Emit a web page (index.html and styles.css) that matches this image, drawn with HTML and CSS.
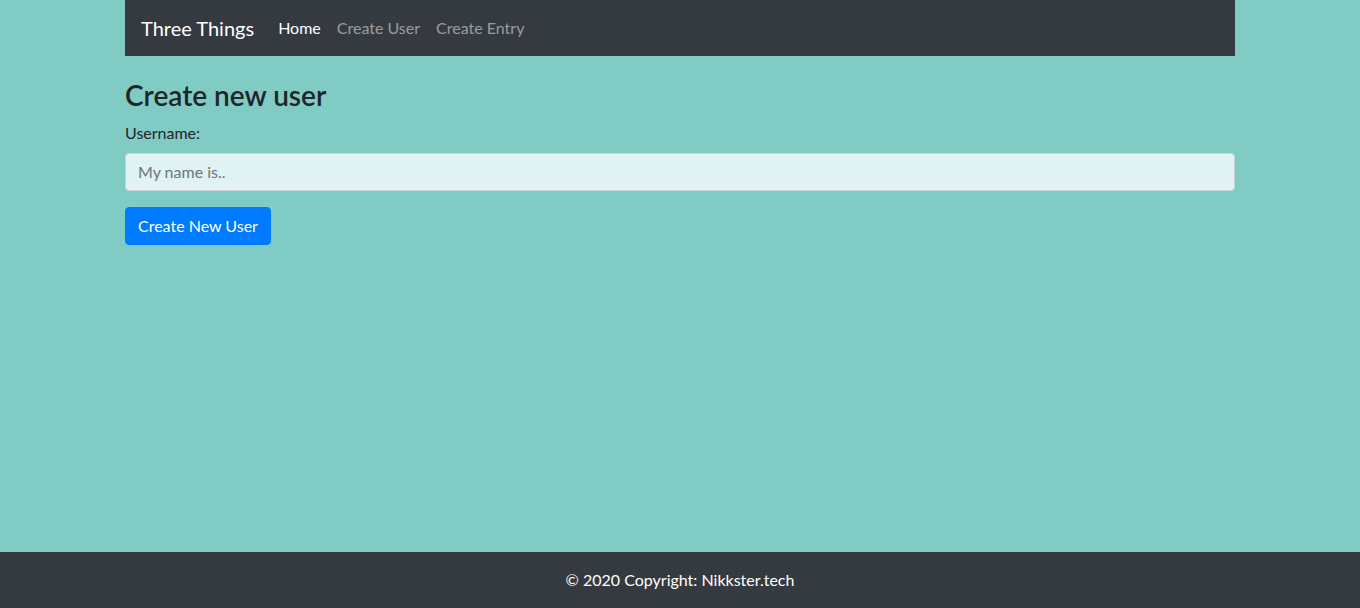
FILE: index.html
```html
<!DOCTYPE html>
<html lang="en">
<head>
<meta charset="utf-8">
<title>Three Things</title>
<link rel="stylesheet" href="styles.css">
</head>
<body>
<div class="page">
  <div class="container">
    <nav class="navbar">
      <a class="brand" href="#">Three Things</a>
      <ul class="nav">
        <li><a class="nav-link active" href="#">Home</a></li>
        <li><a class="nav-link" href="#">Create User</a></li>
        <li><a class="nav-link" href="#">Create Entry</a></li>
      </ul>
    </nav>
    <main class="main">
      <h3 class="title">Create new user</h3>
      <form class="form">
        <div class="form-group">
          <label class="label" for="username">Username:</label>
          <input class="input" id="username" type="text" placeholder="My name is..">
        </div>
        <button class="btn" type="button">Create New User</button>
      </form>
    </main>
  </div>
  <footer class="footer">© 2020 Copyright: Nikkster.tech</footer>
</div>
</body>
</html>
```
FILE: styles.css
```css
* { box-sizing: border-box; }
html, body { margin: 0; padding: 0; }
body {
  font-family: "Segoe UI", Lato, "Noto Sans", sans-serif;
  font-size: 16px;
  line-height: 1.5;
  color: #212529;
  background: #80cbc4;
}
.page {
  min-height: 100vh;
  display: flex;
  flex-direction: column;
}
.container {
  width: 100%;
  max-width: 1140px;
  padding: 0 15px;
  margin: 0 auto;
  flex: 1;
}
.navbar {
  background: #343a40;
  height: 56px;
  display: flex;
  align-items: center;
  padding: 0 16px;
}
.brand {
  color: #fff;
  font-size: 20px;
  text-decoration: none;
  margin-right: 16px;
  line-height: 30px;
}
.nav {
  list-style: none;
  margin: 0;
  padding: 0;
  display: flex;
}
.nav-link {
  display: block;
  padding: 8px;
  color: rgba(255,255,255,0.5);
  text-decoration: none;
}
.nav-link.active { color: #fff; }
.main { padding-top: 23px; }
.title {
  margin: 0 0 8px;
  font-size: 28px;
  font-weight: 600;
  line-height: 1.2;
}
.form-group { margin-bottom: 16px; }
.label {
  display: inline-block;
  margin-bottom: 8px;
}
.input {
  display: block;
  width: 100%;
  height: 38px;
  padding: 6px 12px;
  font: inherit;
  color: #495057;
  background: #e0f2f1;
  border: 1px solid #ced4da;
  border-radius: 4px;
}
.input::placeholder { color: #6c757d; }
.btn {
  display: inline-block;
  height: 38px;
  padding: 6px 12px;
  font: inherit;
  color: #fff;
  background: #007bff;
  border: 1px solid #007bff;
  border-radius: 4px;
}
.footer {
  background: #343a40;
  color: #fff;
  text-align: center;
  padding: 16px 0;
  line-height: 24px;
}
```
